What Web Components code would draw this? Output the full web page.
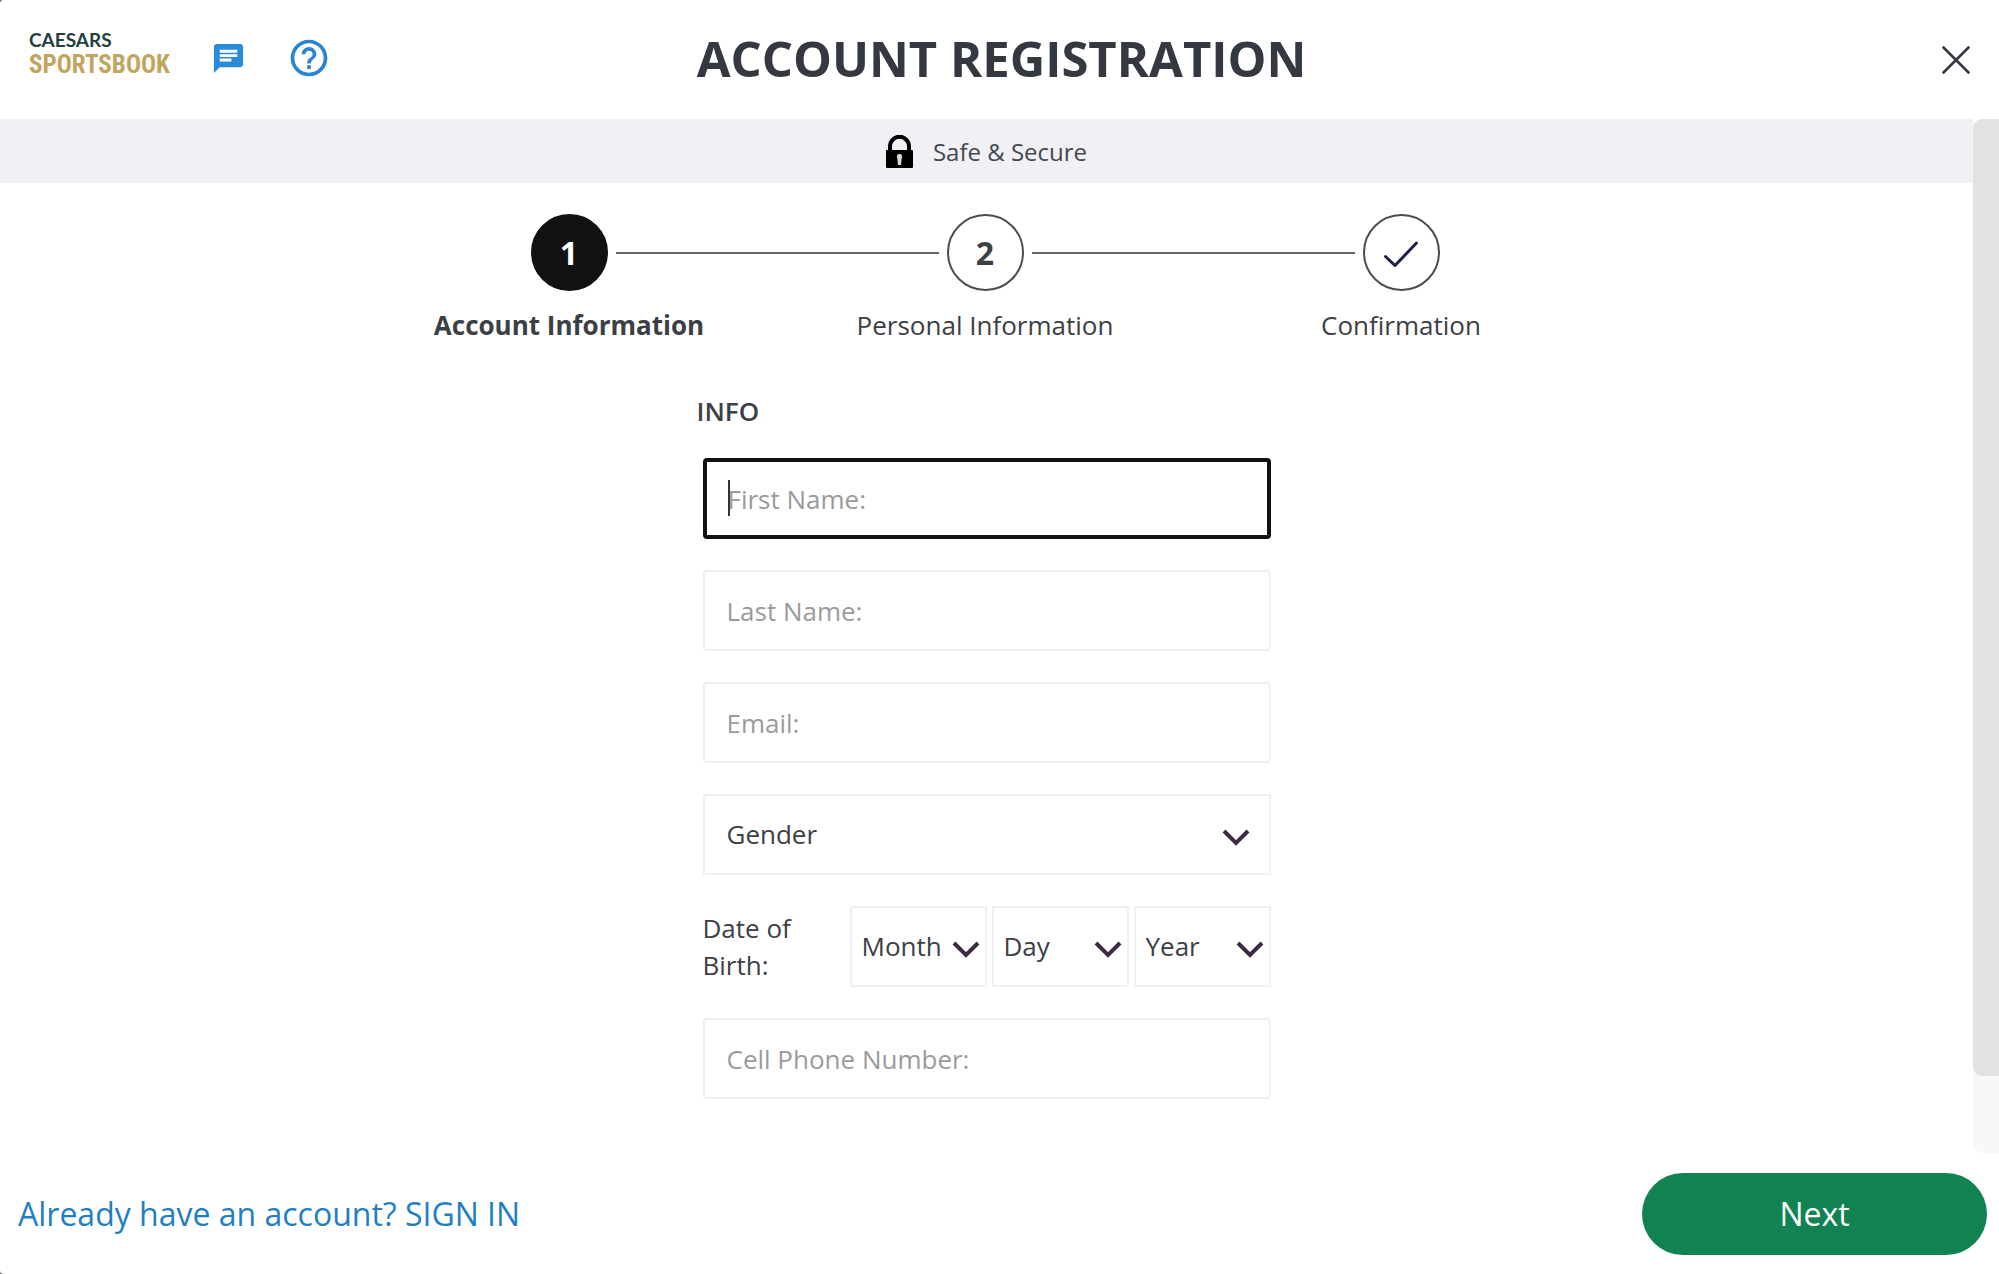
<!DOCTYPE html>
<html lang="en">
<head>
<meta charset="utf-8">
<title>Account Registration</title>
<style>
  html, body { margin: 0; height: 100%; background: #777; }
  body { font-family: "Open Sans", "Noto Sans", sans-serif; font-size: 26px; line-height: 37px; color: #3b4045; }
</style>
</head>
<body>
<registration-page>
  <page-header slot="header">Account Registration</page-header>
  <secure-band>Safe &amp; Secure</secure-band>
  <progress-steps>
    <progress-step current first mark="1">Account Information</progress-step>
    <progress-step mark="2">Personal Information</progress-step>
    <progress-step last>Confirmation</progress-step>
  </progress-steps>
  <form-section heading="Info">
    <text-field label="First Name:" active></text-field>
    <text-field label="Last Name:"></text-field>
    <text-field label="Email:" type="email"></text-field>
    <select-field label="Gender" options="Female,Male"></select-field>
    <birth-date></birth-date>
    <text-field label="Cell Phone Number:" type="tel"></text-field>
  </form-section>
  <page-footer slot="footer"></page-footer>
</registration-page>

<script>
const define = (name, html, setup) => {
  const template = document.createElement('template');
  template.innerHTML = '<style>*{box-sizing:border-box}:host{display:block}</style>' + html;
  customElements.define(name, class extends HTMLElement {
    connectedCallback() {
      if (this.shadowRoot) return;
      const root = this.attachShadow({ mode: 'open' });
      root.append(template.content.cloneNode(true));
      if (setup) setup(this, root);
    }
  });
};

define('registration-page', `
  <style>
    :host { display: flex; flex-direction: column; min-height: 100vh; background: #fff; border-radius: 4px 0 0 4px; }
    .body { flex: 1; display: flex; align-items: stretch; }
    main { flex: 1; min-width: 0; }
    .rail { width: 26px; background: #f8f8f8; border-radius: 10px 0 0 10px; }
    .thumb { height: calc(100% - 77px); background: #e2e2e2; border-radius: 9px 0 0 9px; }
  </style>
  <slot name="header"></slot>
  <div class="body">
    <main><slot></slot></main>
    <div class="rail"><div class="thumb"></div></div>
  </div>
  <slot name="footer"></slot>`);

define('brand-logo', `
  <style>
    a { display: flex; flex-direction: column; margin-bottom: 4px; text-decoration: none; }
    .top { font: 700 19px/18px Lato, sans-serif; color: #22403c; }
    .bottom { font: bold 25px/32px "Roboto Condensed", "Liberation Sans Narrow", sans-serif; color: #c2a45c; }
  </style>
  <a href="#home"><span class="top">CAESARS</span><span class="bottom">SPORTSBOOK</span></a>`);

define('page-header', `
  <style>
    header { display: grid; grid-template-columns: 1fr auto 1fr; align-items: center; height: 119px; padding: 0 28px 3px 32px; }
    .left { display: flex; align-items: center; gap: 41px; margin-left: -3px; }
    h1 { margin: 0; font-size: 49px; line-height: 60px; font-weight: 700; text-transform: uppercase; color: #343840; }
    button { border: 0; padding: 0; background: none; display: flex; }
    .close { justify-self: end; margin-top: 4px; }
    svg { display: block; }
  </style>
  <header>
    <div class="left">
      <brand-logo></brand-logo>
      <button aria-label="Chat"><svg width="35" height="35" viewBox="0 0 24 24" fill="#2a8bd8"><path d="M20 2H4c-1.100 0-1.990.9-1.990 2L2 22l4-4h14c1.100 0 2-.9 2-2V4c0-1.100-.9-2-2-2zM6 9h12v2H6V9zm8 5H6v-2h8v2zm4-6H6V6h12v2z"/></svg></button>
      <button aria-label="Help"><svg width="44" height="44" viewBox="0 0 24 24" fill="#2a85d0"><path d="M11 18h2v-2h-2v2zm1-16C6.480 2 2 6.480 2 12s4.480 10 10 10 10-4.480 10-10S17.520 2 12 2zm0 18c-4.410 0-8-3.590-8-8s3.590-8 8-8 8 3.590 8 8-3.590 8-8 8zm0-14c-2.210 0-4 1.790-4 4h2c0-1.100.9-2 2-2s2 .9 2 2c0 2-3 1.750-3 5h2c0-2.250 3-2.500 3-5 0-2.210-1.790-4-4-4z"/></svg></button>
    </div>
    <h1><slot></slot></h1>
    <button class="close" aria-label="Close"><svg width="30" height="30" viewBox="0 0 30 30" fill="none" stroke="#33373f" stroke-width="2.600" stroke-linecap="round"><path d="M2.500 2.500l25 25M27.500 2.500l-25 25"/></svg></button>
  </header>`);

define('secure-band', `
  <style>
    :host { display: flex; justify-content: center; align-items: center; gap: 20px; height: 64px; background: #f0f0f5; font-size: 24px; color: #44474f; }
    svg { display: block; }
  </style>
  <svg width="27" height="33" viewBox="0 0 27 33"><path d="M4 17V11.500a9.500 9.800 0 0 1 19 0V17" fill="none" stroke="#000" stroke-width="4"/><rect y="15" width="27" height="18" rx="1"/><path d="M13.500 19a2.700 2.700 0 0 1 2.200 4.300L15 30h-3l-.7-6.700A2.700 2.700 0 0 1 13.500 19z" fill="#d9d9dd"/></svg>
  <span><slot></slot></span>`);

define('progress-steps', `
  <style>
    :host { display: flex; justify-content: center; padding: 31px 3px 0 0; }
  </style>
  <slot></slot>`);

define('progress-step', `
  <style>
    :host { flex: 0 1 416px; text-align: center; }
    .track { display: grid; grid-template-columns: 1fr auto 1fr; align-items: center; gap: 8px; }
    .line { height: 2px; background: #63666a; }
    :host([first]) .before, :host([last]) .after { visibility: hidden; }
    .circle { display: flex; align-items: center; justify-content: center; width: 77px; height: 77px; border: 2px solid #4a4c4f; border-radius: 50%; font-size: 32px; font-weight: 700; }
    :host([current]) .circle { background: #111; border-color: #111; color: #fff; }
    .name { margin-top: 16px; }
    :host([current]) .name { font-weight: 700; }
  </style>
  <div class="track"><span class="line before"></span><span class="circle"></span><span class="line after"></span></div>
  <div class="name"><slot></slot></div>`,
  (host, root) => {
    const circle = root.querySelector('.circle');
    if (host.hasAttribute('mark')) circle.textContent = host.getAttribute('mark');
    else circle.innerHTML = '<svg width="36" height="28" viewBox="0 0 36 28" fill="none" stroke="#1d2045" stroke-width="3" stroke-linecap="round"><path d="M2.500 17.500l9.500 9L33.500 4"/></svg>';
  });

define('form-section', `
  <style>
    :host { width: 580px; max-width: 100%; margin: 49px auto 0; }
    h2 { margin: 0 0 28px; font-size: 26px; line-height: 37px; font-weight: 600; text-transform: uppercase; }
    form { display: flex; flex-direction: column; gap: 31px; padding: 0 6px; }
  </style>
  <h2></h2>
  <form><slot></slot></form>`,
  (host, root) => { root.querySelector('h2').textContent = host.getAttribute('heading'); });

define('text-field', `
  <style>
    .box { position: relative; }
    input { display: block; width: 100%; height: 81px; padding: 0 22px; border: 2px solid #f0f0f0; border-radius: 4px; background: #fff; font: inherit; color: inherit; outline: 0; }
    input::placeholder { color: #9b9b9b; opacity: 1; }
    :host([active]) input { border: 4px solid #111; padding: 0 21px; }
    .caret { display: none; position: absolute; left: 25px; top: 22px; width: 2px; height: 36px; background: #333; }
    :host([active]) .caret { display: block; }
  </style>
  <div class="box"><input><span class="caret"></span></div>`,
  (host, root) => {
    const input = root.querySelector('input');
    input.type = host.getAttribute('type') || 'text';
    input.placeholder = host.getAttribute('label');
    input.setAttribute('aria-label', host.getAttribute('label'));
  });

define('select-field', `
  <style>
    .box { display: grid; align-items: center; }
    select, svg { grid-area: 1 / 1; }
    select { appearance: none; width: 100%; height: 81px; padding: 0 22px; border: 2px solid #f0f0f0; border-radius: 0; background: #fff; font: inherit; color: inherit; outline: 0; }
    svg { justify-self: end; margin: 6px 21px 0 0; pointer-events: none; }
    :host([compact]) select { padding: 0 10px; }
    :host([compact]) svg { margin-right: 7px; }
  </style>
  <div class="box">
    <select></select>
    <svg width="28" height="17" viewBox="0 0 28 17" fill="none" stroke="#3d2a45" stroke-width="4"><path d="M2 2l12 12L26 2"/></svg>
  </div>`,
  (host, root) => {
    const select = root.querySelector('select');
    const label = host.getAttribute('label');
    select.setAttribute('aria-label', label);
    select.add(new Option(label, ''));
    (host.getAttribute('options') || '').split(',').filter(Boolean).forEach(o => select.add(new Option(o)));
  });

define('birth-date', `
  <style>
    .row { display: grid; grid-template-columns: 1fr repeat(3, 137px); gap: 5px; align-items: center; }
    .name { max-width: 110px; }
  </style>
  <div class="row" role="group" aria-labelledby="dob">
    <span class="name" id="dob">Date of Birth:</span>
    <select-field compact label="Month" options="1,2,3,4,5,6,7,8,9,10,11,12"></select-field>
    <select-field compact label="Day" options="1,2,3,4,5,6,7,8,9,10"></select-field>
    <select-field compact label="Year" options="2000,1999,1998"></select-field>
  </div>`);

define('page-footer', `
  <style>
    footer { display: flex; justify-content: space-between; align-items: center; height: 121px; padding: 0 12px 0 18px; font-size: 32px; }
    a { color: #1f7fc4; text-decoration: none; }
    button { width: 345px; height: 82px; border: 0; border-radius: 41px; background: #118252; color: #fff; font: inherit; }
  </style>
  <footer><a href="#sign-in">Already have an account? SIGN IN</a><button>Next</button></footer>`);
</script>
</body>
</html>
